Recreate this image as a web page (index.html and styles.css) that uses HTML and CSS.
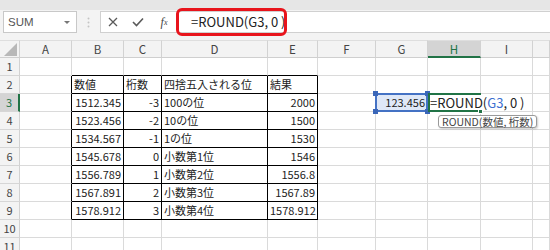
FILE: index.html
```html
<!DOCTYPE html>
<html lang="ja">
<head>
<meta charset="utf-8">
<title>ROUND</title>
<link rel="stylesheet" href="styles.css">
</head>
<body>
<div class="app">
  <div class="topband"></div>
  <div class="toolbar">
    <div class="namebox"><span>SUM</span><span class="caret"></span></div>
    <div class="grip">
      <svg width="3" height="11" viewBox="0 0 3 11"><circle cx="1.5" cy="1.5" r="1" fill="#c4c4c4"/><circle cx="1.5" cy="5.5" r="1" fill="#c4c4c4"/><circle cx="1.5" cy="9.5" r="1" fill="#c4c4c4"/></svg>
    </div>
    <div class="fbar">
      <span class="ficon first">
        <svg width="10" height="10" viewBox="0 0 10 10"><path d="M1 1 L9 9 M9 1 L1 9" stroke="#5a5a5a" stroke-width="1.3" fill="none"/></svg>
      </span>
      <span class="ficon">
        <svg width="12" height="10" viewBox="0 0 12 10"><path d="M1 5 L4.5 8.5 L11 1.5" stroke="#5a5a5a" stroke-width="1.6" fill="none"/></svg>
      </span>
      <span class="ficon fx"><i>f</i><sub>x</sub></span>
      <span class="ftext">=ROUND(G3, 0 )</span>
    </div>
  </div>

  <div class="sheet">
    <div class="row hdr">
      <div class="c corner"><span class="tri"></span></div>
      <div class="c">A</div><div class="c">B</div><div class="c">C</div><div class="c">D</div><div class="c">E</div><div class="c">F</div><div class="c">G</div><div class="c hsel">H</div><div class="c">I</div><div class="c"></div>
    </div>
    <div class="row">
      <div class="c rh">1</div>
      <div class="c"></div><div class="c bt"></div><div class="c bt"></div><div class="c bt"></div><div class="c bt"></div><div class="c"></div><div class="c"></div><div class="c"></div><div class="c"></div><div class="c"></div>
    </div>
    <div class="row">
      <div class="c rh">2</div>
      <div class="c bl"></div><div class="c bx">数値</div><div class="c bx">桁数</div><div class="c bx">四捨五入される位</div><div class="c bx">結果</div><div class="c"></div><div class="c"></div><div class="c"></div><div class="c"></div><div class="c"></div>
    </div>
    <div class="row">
      <div class="c rh rsel">3</div>
      <div class="c bl"></div><div class="c bx num">1512.345</div><div class="c bx num">-3</div><div class="c bx">100の位</div><div class="c bx num">2000</div><div class="c"></div>
      <div class="c num ref">123.456<span class="hd h1"></span><span class="hd h2"></span><span class="hd h3"></span><span class="hd h4"></span></div>
      <div class="c edit"><span class="editbox">=ROUND(<span class="blue">G3</span>, 0 )</span><span class="fill"></span></div>
      <div class="c"></div><div class="c"></div>
    </div>
    <div class="row">
      <div class="c rh">4</div>
      <div class="c bl"></div><div class="c bx num">1523.456</div><div class="c bx num">-2</div><div class="c bx">10の位</div><div class="c bx num">1500</div><div class="c"></div><div class="c"></div><div class="c"></div><div class="c"></div><div class="c"></div>
    </div>
    <div class="row">
      <div class="c rh">5</div>
      <div class="c bl"></div><div class="c bx num">1534.567</div><div class="c bx num">-1</div><div class="c bx">1の位</div><div class="c bx num">1530</div><div class="c"></div><div class="c"></div><div class="c"></div><div class="c"></div><div class="c"></div>
    </div>
    <div class="row">
      <div class="c rh">6</div>
      <div class="c bl"></div><div class="c bx num">1545.678</div><div class="c bx num">0</div><div class="c bx">小数第1位</div><div class="c bx num">1546</div><div class="c"></div><div class="c"></div><div class="c"></div><div class="c"></div><div class="c"></div>
    </div>
    <div class="row">
      <div class="c rh">7</div>
      <div class="c bl"></div><div class="c bx num">1556.789</div><div class="c bx num">1</div><div class="c bx">小数第2位</div><div class="c bx num">1556.8</div><div class="c"></div><div class="c"></div><div class="c"></div><div class="c"></div><div class="c"></div>
    </div>
    <div class="row">
      <div class="c rh">8</div>
      <div class="c bl"></div><div class="c bx num">1567.891</div><div class="c bx num">2</div><div class="c bx">小数第3位</div><div class="c bx num">1567.89</div><div class="c"></div><div class="c"></div><div class="c"></div><div class="c"></div><div class="c"></div>
    </div>
    <div class="row">
      <div class="c rh">9</div>
      <div class="c bl"></div><div class="c bx num">1578.912</div><div class="c bx num">3</div><div class="c bx">小数第4位</div><div class="c bx num">1578.912</div><div class="c"></div><div class="c"></div><div class="c"></div><div class="c"></div><div class="c"></div>
    </div>
    <div class="row">
      <div class="c rh">10</div>
      <div class="c"></div><div class="c"></div><div class="c"></div><div class="c"></div><div class="c"></div><div class="c"></div><div class="c"></div><div class="c"></div><div class="c"></div><div class="c"></div>
    </div>
    <div class="row">
      <div class="c rh">11</div>
      <div class="c"></div><div class="c"></div><div class="c"></div><div class="c"></div><div class="c"></div><div class="c"></div><div class="c"></div><div class="c"></div><div class="c"></div><div class="c"></div>
    </div>
  </div>

  <div class="callout"></div>
  <div class="tip">ROUND(数値, 桁数)</div>
</div>
</body>
</html>
```

FILE: styles.css
```css
* { box-sizing: border-box; }

body {
  margin: 0;
  width: 550px;
  height: 250px;
  overflow: hidden;
  background: #fff;
  font-family: "Noto Sans CJK JP", sans-serif;
}

.app {
  position: relative;
  width: 550px;
  height: 250px;
  overflow: hidden;
}

.topband {
  height: 10px;
  background: #e6e6e6;
}

.toolbar {
  height: 30px;
  background: #f3f3f3;
  display: flex;
  align-items: flex-start;
  padding: 1px 0 0 3px;
}

.namebox {
  width: 74px;
  height: 22px;
  border: 1px solid #c8c8c8;
  background: #fff;
  display: flex;
  align-items: center;
  justify-content: space-between;
  padding: 0 6px 0 4px;
  font-family: "Liberation Sans", Arial, sans-serif;
  font-size: 11.5px;
  color: #555;
}

.caret {
  width: 0;
  height: 0;
  border-left: 3px solid transparent;
  border-right: 3px solid transparent;
  border-top: 3px solid #777;
}

.grip {
  width: 23px;
  height: 22px;
  display: flex;
  align-items: center;
  justify-content: center;
}

.fbar {
  flex: 1;
  height: 22px;
  background: #fff;
  border: 1px solid #d0d0d0;
  border-right: none;
  display: flex;
  align-items: center;
}

.ficon {
  width: 26px;
  height: 20px;
  display: flex;
  align-items: center;
  justify-content: center;
}

.ficon.first { width: 24px; }

.fx {
  font-family: "Liberation Serif", serif;
  font-size: 12px;
  color: #444;
}

.fx sub {
  font-size: 8px;
  font-style: italic;
  vertical-align: -1px;
}

.ftext {
  padding-left: 14px;
  font-size: 13px;
  color: #222;
  line-height: 20px;
}

/* sheet */
.row {
  display: grid;
  grid-template-columns: 20px 52px 52px 38px 106px 50px 58px 52px 53px 52px 1fr;
  height: 18px;
}

.c {
  position: relative;
  border-right: 1px solid #dadada;
  border-bottom: 1px solid #dadada;
  font-size: 11px;
  line-height: 17px;
  padding: 0 2px;
  white-space: nowrap;
  overflow: hidden;
  color: #222;
}

.hdr .c {
  background: #f3f3f3;
  border-right-color: #d2d2d2;
  border-bottom-color: #cfcfcf;
  border-top: 1px solid #dedede;
  text-align: center;
  color: #444;
  font-size: 11.5px;
  line-height: 16px;
}

.corner { overflow: hidden; }

.tri {
  position: absolute;
  right: 2px;
  bottom: 1px;
  width: 0;
  height: 0;
  border-left: 13px solid transparent;
  border-bottom: 13px solid #b8b8b8;
}

.hdr .hsel {
  background: #d4d4d4;
  border-bottom: 2px solid #217346;
  color: #217346;
}

.rh {
  background: #f3f3f3;
  border-right-color: #d2d2d2;
  border-bottom-color: #d6d6d6;
  text-align: center;
  color: #444;
}

.rh.rsel {
  background: #d4d4d4;
  border-right: 2px solid #217346;
  color: #217346;
}

.num { text-align: right; }

.bt { border-bottom-color: #000; }
.bl { border-right-color: #000; }
.bx { border-right-color: #000; border-bottom-color: #000; }

.ref {
  overflow: visible;
  background: #dfe8f7;
  z-index: 2;
}

.ref::after {
  content: "";
  position: absolute;
  left: -1px;
  top: -1px;
  right: -1px;
  bottom: -1px;
  border: 2px solid #4472c4;
}

.hd {
  position: absolute;
  width: 5px;
  height: 5px;
  background: #3a66b8;
  z-index: 3;
}
.h1 { left: -3px; top: -3px; }
.h2 { right: -3px; top: -3px; }
.h3 { left: -3px; bottom: -3px; }
.h4 { right: -3px; bottom: -3px; }

.edit {
  overflow: visible;
  z-index: 3;
}

.edit::before {
  content: "";
  position: absolute;
  left: 0;
  top: -1px;
  right: -1px;
  bottom: -1px;
  border: 2px solid #217346;
  border-right: none;
}

.editbox {
  position: absolute;
  left: 2px;
  top: 1px;
  height: 15px;
  background: #fff;
  padding: 0 4px 0 0;
  font-size: 13px;
  line-height: 15px;
  color: #222;
  z-index: 2;
}

.blue { color: #3d6fd0; }

.fill {
  position: absolute;
  right: -3px;
  bottom: -3px;
  width: 5px;
  height: 5px;
  background: #217346;
  border: 1px solid #fff;
  z-index: 4;
}

.callout {
  position: absolute;
  left: 176px;
  top: 8px;
  width: 111px;
  height: 28px;
  border: 3px solid #e8141c;
  border-radius: 6px;
}

.tip {
  position: absolute;
  left: 438px;
  top: 115px;
  height: 13px;
  padding: 0 3px;
  border: 1px solid #9a9a9a;
  border-radius: 3px;
  background: #fff;
  font-size: 10.5px;
  line-height: 11px;
  color: #444;
  white-space: nowrap;
  box-shadow: 1px 1px 2px rgba(0,0,0,0.2);
  z-index: 5;
}
```
